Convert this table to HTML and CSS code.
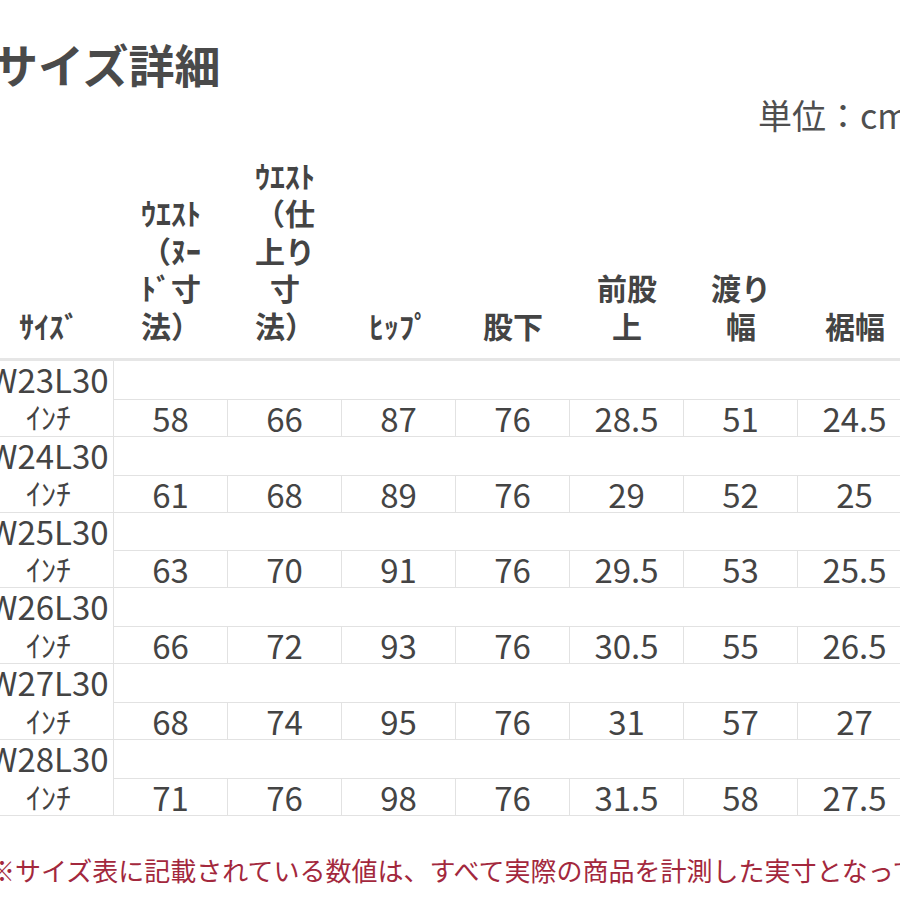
FILE: index.html
```html
<!DOCTYPE html>
<html lang="ja">
<head>
<meta charset="utf-8">
<title>サイズ詳細</title>
<link rel="stylesheet" href="styles.css">
</head>
<body>
<div class="page">
  <h1 class="title">サイズ詳細</h1>
  <div class="unit">単位：cm</div>
  <div class="table">
    <div class="th">ｻｲｽﾞ</div>
    <div class="th">ｳｴｽﾄ<br>（ﾇｰ<br>ﾄﾞ寸<br>法）</div>
    <div class="th">ｳｴｽﾄ<br>（仕<br>上り<br>寸<br>法）</div>
    <div class="th">ﾋｯﾌﾟ</div>
    <div class="th">股下</div>
    <div class="th">前股<br>上</div>
    <div class="th">渡り<br>幅</div>
    <div class="th">裾幅</div>

    <div class="label"><span class="size">W23L30</span><span class="inch">ｲﾝﾁ</span></div>
    <div class="td">58</div><div class="td">66</div><div class="td">87</div><div class="td">76</div><div class="td">28.5</div><div class="td">51</div><div class="td">24.5</div>

    <div class="label"><span class="size">W24L30</span><span class="inch">ｲﾝﾁ</span></div>
    <div class="td">61</div><div class="td">68</div><div class="td">89</div><div class="td">76</div><div class="td">29</div><div class="td">52</div><div class="td">25</div>

    <div class="label"><span class="size">W25L30</span><span class="inch">ｲﾝﾁ</span></div>
    <div class="td">63</div><div class="td">70</div><div class="td">91</div><div class="td">76</div><div class="td">29.5</div><div class="td">53</div><div class="td">25.5</div>

    <div class="label"><span class="size">W26L30</span><span class="inch">ｲﾝﾁ</span></div>
    <div class="td">66</div><div class="td">72</div><div class="td">93</div><div class="td">76</div><div class="td">30.5</div><div class="td">55</div><div class="td">26.5</div>

    <div class="label"><span class="size">W27L30</span><span class="inch">ｲﾝﾁ</span></div>
    <div class="td">68</div><div class="td">74</div><div class="td">95</div><div class="td">76</div><div class="td">31</div><div class="td">57</div><div class="td">27</div>

    <div class="label"><span class="size">W28L30</span><span class="inch">ｲﾝﾁ</span></div>
    <div class="td">71</div><div class="td">76</div><div class="td">98</div><div class="td">76</div><div class="td">31.5</div><div class="td">58</div><div class="td">27.5</div>
  </div>
  <p class="note">※サイズ表に記載されている数値は、すべて実際の商品を計測した実寸となっております。</p>
</div>
</body>
</html>
```

FILE: styles.css
```css
html, body {
  margin: 0;
  padding: 0;
  background: #ffffff;
  overflow: hidden;
}
body {
  font-family: "Noto Sans CJK JP", "Noto Sans", sans-serif;
  color: #444444;
}
.page {
  margin-left: -16px;
  width: 980px;
}
.title {
  margin: 0;
  padding: 35px 0 0 8px;
  font-size: 46px;
  line-height: 56px;
  font-weight: 700;
  color: #4a4a4a;
  white-space: nowrap;
}
.unit {
  margin-top: 4px;
  padding-left: 774px;
  font-size: 34px;
  line-height: 40px;
  color: #4f4f4f;
  white-space: nowrap;
}
.table {
  margin-top: 22px;
  display: grid;
  grid-template-columns: 130px repeat(7, 114px);
}
.th {
  display: flex;
  flex-direction: column;
  justify-content: flex-end;
  text-align: center;
  font-size: 30px;
  line-height: 37.4px;
  font-weight: 700;
  color: #444444;
  padding-bottom: 14px;
  border-bottom: 3px solid #e6e6e6;
}
.label {
  display: flex;
  flex-direction: column;
  align-items: center;
  border-right: 1px solid #e2e2e2;
  border-bottom: 1px solid #e2e2e2;
  line-height: 37.4px;
  color: #444444;
  white-space: nowrap;
}
.size {
  font-size: 33px;
}
.inch {
  font-size: 30px;
}
.td {
  align-self: end;
  box-sizing: border-box;
  height: 38px;
  border-top: 1px solid #e2e2e2;
  border-bottom: 1px solid #e2e2e2;
  border-right: 1px solid #e2e2e2;
  text-align: center;
  font-size: 33px;
  line-height: 36px;
  color: #444444;
}
.note {
  margin: 36px 0 0 0;
  padding-left: 5px;
  font-size: 26px;
  line-height: 36px;
  color: #a3283d;
  white-space: nowrap;
}
```
